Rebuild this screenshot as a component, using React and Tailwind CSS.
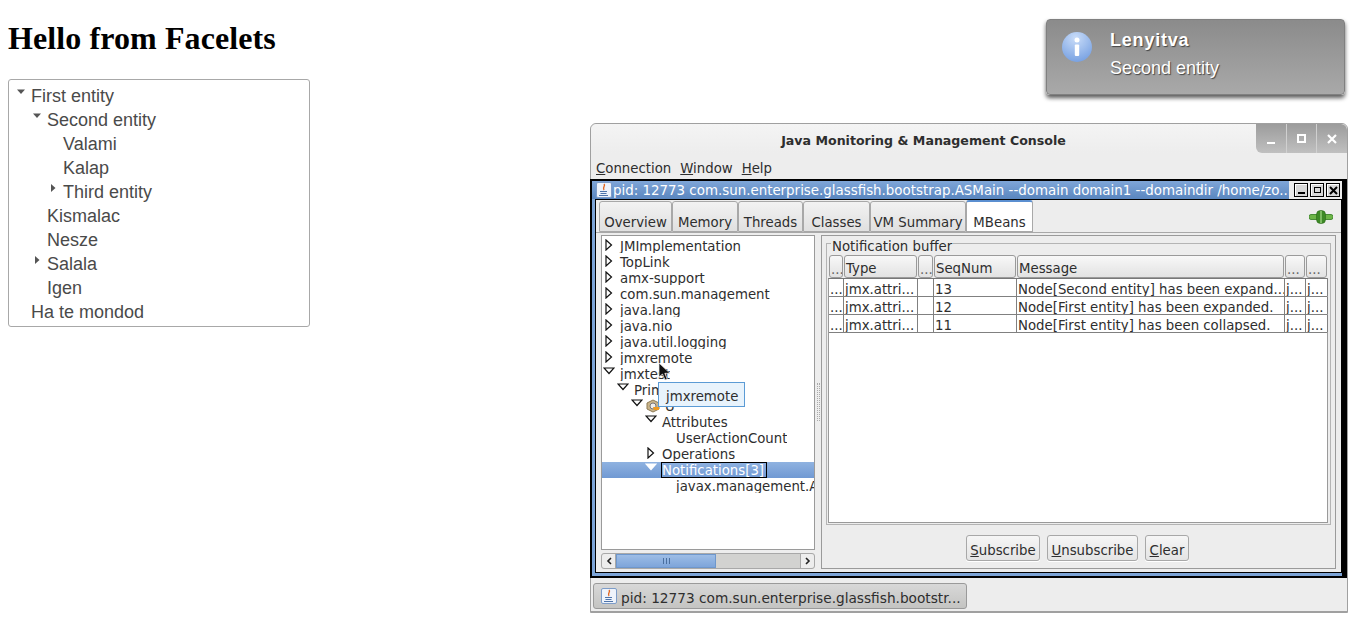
import React from 'react';

const JAVA_FONT = "font-['DejaVu_Sans',sans-serif]";

const webTree = [
  { label: 'First entity', level: 0, arrow: 'down' },
  { label: 'Second entity', level: 1, arrow: 'down' },
  { label: 'Valami', level: 2 },
  { label: 'Kalap', level: 2 },
  { label: 'Third entity', level: 2, arrow: 'right' },
  { label: 'Kismalac', level: 1 },
  { label: 'Nesze', level: 1 },
  { label: 'Salala', level: 1, arrow: 'right' },
  { label: 'Igen', level: 1 },
  { label: 'Ha te mondod', level: 0 },
];

const mbeans = [
  { label: 'JMImplementation', pad: 0, arrow: 'right' },
  { label: 'TopLink', pad: 0, arrow: 'right' },
  { label: 'amx-support', pad: 0, arrow: 'right' },
  { label: 'com.sun.management', pad: 0, arrow: 'right' },
  { label: 'java.lang', pad: 0, arrow: 'right' },
  { label: 'java.nio', pad: 0, arrow: 'right' },
  { label: 'java.util.logging', pad: 0, arrow: 'right' },
  { label: 'jmxremote', pad: 0, arrow: 'right' },
  { label: 'jmxtest', pad: 0, arrow: 'down' },
  { label: 'Primary', pad: 14, arrow: 'down' },
  { label: 'U', pad: 28, arrow: 'down', bean: true },
  { label: 'Attributes', pad: 42, arrow: 'down' },
  { label: 'UserActionCount', pad: 56 },
  { label: 'Operations', pad: 42, arrow: 'right' },
  { label: 'Notifications[3]', pad: 42, arrow: 'down', selected: true },
  { label: 'javax.management.AttributeChangeNotification', pad: 56 },
];

const columns = [
  { title: '...', width: 'w-[15px]' },
  { title: 'Type', width: 'w-[74px]' },
  { title: '...', width: 'w-[16px]' },
  { title: 'SeqNum', width: 'w-[83px]' },
  { title: 'Message', width: 'w-[268px]' },
  { title: '...', width: 'w-[21px]' },
  { title: '...', width: 'w-[22px]' },
];

const rows = [
  ['...', 'jmx.attri...', '', '13', 'Node[Second entity] has been expand...', 'j...', 'j...'],
  ['...', 'jmx.attri...', '', '12', 'Node[First entity] has been expanded.', 'j...', 'j...'],
  ['...', 'jmx.attri...', '', '11', 'Node[First entity] has been collapsed.', 'j...', 'j...'],
];

const tabs = [
  { label: 'Overview', width: 'w-[73px]' },
  { label: 'Memory', width: 'w-[66px]' },
  { label: 'Threads', width: 'w-[65px]' },
  { label: 'Classes', width: 'w-[67px]' },
  { label: 'VM Summary', width: 'w-[96px]' },
  { label: 'MBeans', width: 'w-[67px]', active: true },
];

function WebCaret({ dir }) {
  return (
    <svg width="8" height="8" viewBox="0 0 8 8" className="shrink-0">
      {dir === 'down' ? <path d="M0 1.5h8L4 6z" fill="#555" /> : <path d="M2 0l4.5 4L2 8z" fill="#555" />}
    </svg>
  );
}

function WebTree() {
  return (
    <div className="w-[302px] h-[248px] mt-[22px] border border-[#a8a8a8] rounded-[3px] pt-1 font-['Liberation_Sans',sans-serif] text-[18px] text-[#4a4a4a]">
      {webTree.map((node) => (
        <div key={node.label} className={`flex items-center h-6 ${node.level === 0 ? 'pl-[5px]' : node.level === 1 ? 'pl-[21px]' : 'pl-[37px]'}`}>
          <span className="w-[14px] h-6 shrink-0 flex justify-center pt-[4px] mr-[3px]">
            {node.arrow && <WebCaret dir={node.arrow} />}
          </span>
          <span>{node.label}</span>
        </div>
      ))}
    </div>
  );
}

function Toast() {
  return (
    <div className="absolute left-[1046px] top-[19px] w-[299px] h-[76px] rounded-[4px] border border-[#808080] bg-gradient-to-b from-[#8b8b8b] to-[#a9a9a9] shadow-[0_3px_4px_rgba(0,0,0,0.65)] flex font-['Liberation_Sans',sans-serif] text-white [text-shadow:1px_1px_1px_#444]">
      <svg width="32" height="32" viewBox="0 0 32 32" className="ml-[14px] mt-[11px] shrink-0">
        <defs>
          <radialGradient id="infoFill" cx="0.45" cy="0.2" r="0.9">
            <stop offset="0" stopColor="#c9dcf8" />
            <stop offset="1" stopColor="#6f9be0" />
          </radialGradient>
        </defs>
        <circle cx="16" cy="16" r="15" fill="url(#infoFill)" />
        <circle cx="16" cy="9" r="2.5" fill="#fff" />
        <rect x="13.8" y="13.5" width="4.4" height="11.5" rx="1" fill="#fff" />
      </svg>
      <div className="ml-[17px] pt-[7px]">
        <div className="font-bold text-[18px] tracking-[0.8px] leading-[26px]">Lenyitva</div>
        <div className="text-[18px] leading-[28px] mt-[1px]">Second entity</div>
      </div>
    </div>
  );
}

function WindowButtons() {
  return (
    <div className="w-[91px] h-[29px] flex rounded-bl-[6px] rounded-tr-[6px] bg-gradient-to-b from-[#9c9c9c] to-[#c0c0c0] text-white">
      <div className="flex-1 flex items-center justify-center border-r border-[#d0d0d0]">
        <span className="w-[8px] h-[2px] mt-[8px] bg-white" />
      </div>
      <div className="flex-1 flex items-center justify-center border-r border-[#d0d0d0]">
        <span className="w-[9px] h-[9px] border-2 border-white" />
      </div>
      <div className="flex-1 flex items-center justify-center">
        <svg width="10" height="10" viewBox="0 0 10 10"><path d="M1 1l8 8M9 1l-8 8" stroke="#fff" strokeWidth="2.2" /></svg>
      </div>
    </div>
  );
}

function JavaIcon({ size = 16 }) {
  return (
    <svg width={size} height={size} viewBox="0 0 16 16" className="shrink-0">
      <rect x="0.5" y="0.5" width="15" height="15" rx="1.5" fill="#eef3fb" stroke="#7d9cc8" />
      <path d="M8 2c2 2-2 3 0 6" stroke="#e2641c" strokeWidth="1.4" fill="none" />
      <path d="M4 9.5h7M4.5 11.5h6M3 13.5h9" stroke="#4e74aa" strokeWidth="1.1" />
    </svg>
  );
}

function FrameButton({ children }) {
  return (
    <span className="w-[14px] h-[14px] flex items-center justify-center border border-black bg-[#d8d8d8] shadow-[inset_1px_1px_0_#fff]">
      {children}
    </span>
  );
}

function TreeArrow({ dir, selected }) {
  const fill = selected ? '#fff' : 'none';
  const stroke = selected ? '#fff' : '#111';
  if (dir === 'down') {
    return (
      <svg width="12" height="8" viewBox="0 0 12 8" className="shrink-0 -ml-[2px]">
        <path d="M1 1h10L6 6.5z" fill={fill} stroke={stroke} strokeWidth="1.2" />
      </svg>
    );
  }
  return (
    <svg width="8" height="12" viewBox="0 0 8 12" className="shrink-0">
      <path d="M1 1l5.5 5L1 11z" fill={fill} stroke={stroke} strokeWidth="1.2" />
    </svg>
  );
}

function BeanIcon() {
  return (
    <svg width="16" height="16" viewBox="0 0 16 16" className="shrink-0 ml-[-2px] mr-[3px]">
      <path d="M8 2l6 3v6l-6 3-6-3V5z" fill="#c9b48a" stroke="#8d7a55" />
      <circle cx="8" cy="8" r="3" fill="#eee" stroke="#777" />
      <path d="M8 9h6v3H9z" fill="#ef9a1f" />
    </svg>
  );
}

function MBeanTree() {
  return (
    <div className="flex-1 min-h-0 bg-white border border-[#9a9a9a] overflow-hidden pt-[2px] text-[13.3px]">
      {mbeans.map((node) => (
        <div
          key={node.label}
          style={{ paddingLeft: 3 + node.pad }}
          className={`flex items-start h-4 whitespace-nowrap overflow-hidden ${node.selected ? 'bg-gradient-to-b from-[#8fb2e0] to-[#7099d3] text-white' : 'text-[#2e2e2e]'}`}
        >
          <span className="w-[14px] h-4 shrink-0 flex pt-[1px]">
            {node.arrow && <TreeArrow dir={node.arrow} selected={node.selected} />}
          </span>
          {node.bean && <BeanIcon />}
          {/* swing repaint clips the descenders in the real tree */}
          <span className={`inline-block leading-[18px] pl-[1px] overflow-hidden ${node.selected ? 'h-4 pr-[3px] outline outline-1 outline-black -outline-offset-1' : 'h-[15px]'}`}>{node.label}</span>
        </div>
      ))}
    </div>
  );
}

function ScrollBar() {
  return (
    <div className="h-[16px] mt-[3px] flex rounded-[3px] border border-[#a8a8a8] bg-[#d2d2d0]">
      <span className="w-[14px] flex items-center justify-center border-r border-[#a8a8a8] bg-[#ededed] rounded-l-[3px]">
        <svg width="6" height="8" viewBox="0 0 6 8"><path d="M5 1L2 4l3 3" stroke="#222" strokeWidth="1.6" fill="none" /></svg>
      </span>
      <span className="w-[100px] flex items-center justify-center border border-[#6e97cc] bg-gradient-to-b from-[#9dbde6] to-[#7ea5da]">
        <span className="w-[7px] h-[6px] border-x border-[#4a6f9f] relative">
          <span className="block w-px h-full mx-auto bg-[#4a6f9f]" />
        </span>
      </span>
      <span className="flex-1" />
      <span className="w-[14px] flex items-center justify-center border-l border-[#a8a8a8] bg-[#ededed] rounded-r-[3px]">
        <svg width="6" height="8" viewBox="0 0 6 8"><path d="M1 1l3 3-3 3" stroke="#222" strokeWidth="1.6" fill="none" /></svg>
      </span>
    </div>
  );
}

function NotificationTable() {
  return (
    <div className="flex-1 min-h-0 flex flex-col text-[13.3px] text-[#2e2e2e]">
      <div className="flex h-[24px] pl-px">
        {columns.map((col, i) => (
          <div key={i} className={`${col.width} shrink-0 pr-px pt-px`}>
            <div className="h-[23px] flex items-center px-px whitespace-nowrap overflow-hidden rounded-[3px] border border-[#9a9a9a] bg-gradient-to-b from-[#f8f8f8] to-[#e2e2e2]">
              <span className={col.title === '...' ? 'text-[#666] pt-[6px]' : 'pt-[4px]'}>{col.title}</span>
            </div>
          </div>
        ))}
      </div>
      <div className="flex-1 bg-white border border-[#9a9a9a] border-t-[#777]">
        {rows.map((row) => (
          <div key={row[3]} className="flex h-[18px] border-b border-[#808080]">
            {row.map((cell, i) => (
              <div key={i} className={`${columns[i].width} shrink-0 border-r border-[#808080] leading-[21px] px-px whitespace-nowrap overflow-hidden`}>
                {cell}
              </div>
            ))}
          </div>
        ))}
      </div>
    </div>
  );
}

function ActionButton({ first, rest, width }) {
  return (
    <button className={`${width} h-[26px] pt-[5px] leading-[16px] rounded-[3px] border border-[#a8a8a8] bg-gradient-to-b from-[#f6f6f6] to-[#e4e4e4] text-[13.3px] text-[#2e2e2e] shadow-[0_1px_0_#fff]`}>
      <span className="underline">{first}</span>{rest}
    </button>
  );
}

function JavaWindow() {
  return (
    <div className={`absolute left-[590px] top-[123px] w-[758px] h-[490px] flex flex-col rounded-t-[6px] border border-[#a0a0a0] bg-[#ededed] ${JAVA_FONT}`}>
      <div className="h-[29px] flex bg-gradient-to-b from-[#f4f4f4] to-[#ededed] rounded-t-[6px]">
        <div className="flex-1 text-center font-bold text-[12.6px] leading-[33px] text-[#2e2e2e]">Java Monitoring &amp; Management Console</div>
        <WindowButtons />
      </div>
      <div className="h-[26px] flex items-end pl-[5px] pb-[1px] gap-[9px] text-[13.3px] leading-[18px] text-[#2e2e2e]">
        <span><span className="underline">C</span>onnection</span>
        <span><span className="underline">W</span>indow</span>
        <span><span className="underline">H</span>elp</span>
      </div>

      <div className="h-[399px] -ml-px flex flex-col border-2 border-r-[5px] border-black bg-[#7ba3d6] pl-[3px] pb-[3px]">
        <div className="h-[18px] flex items-center bg-gradient-to-b from-[#7fa6d8] to-[#5a86bf] text-white text-[13.4px] whitespace-nowrap overflow-hidden ml-[-3px] pl-[4px]">
          <JavaIcon />
          <span className="w-[677px] overflow-hidden pl-[1px] pt-[2px]">pid: 12773 com.sun.enterprise.glassfish.bootstrap.ASMain --domain domain1 --domaindir /home/zo...</span>
          <div className="flex-1 h-full flex justify-end items-center gap-[2px] pr-[2px] bg-[#ededed] text-black">
            <FrameButton><span className="w-[7px] h-[2px] mt-[5px] bg-black" /></FrameButton>
            <FrameButton><span className="w-[7px] h-[6px] border border-black" /></FrameButton>
            <FrameButton>
              <svg width="9" height="9" viewBox="0 0 9 9"><path d="M1 1l7 7M8 1L1 8" stroke="#000" strokeWidth="2" /></svg>
            </FrameButton>
          </div>
        </div>

        <div className="flex-1 min-h-0 flex flex-col bg-[#ededed] border border-black">
          <div className="h-[32px] flex items-end pl-[3px]">
            {tabs.map((tab) => (
              <div
                key={tab.label}
                className={`${tab.width} h-[31px] flex items-end justify-center leading-[16px] rounded-t-[3px] border border-[#a8a8a8] text-[13.3px] text-[#2e2e2e] whitespace-nowrap ${tab.active ? 'bg-white border-t-[#5b8fd0] border-t-2 h-[32px]' : 'bg-gradient-to-b from-[#f2f2f2] to-[#e0e0e0]'}`}
              >
                {tab.label}
              </div>
            ))}
            <div className="flex-1 flex justify-end pr-[8px] pb-[8px]">
              <svg width="24" height="14" viewBox="0 0 24 14">
                <rect x="0" y="4.5" width="24" height="5" rx="2" fill="#6db548" stroke="#2f7a1e" strokeWidth="0.8" />
                <rect x="7.5" y="0.5" width="9" height="13" rx="4" fill="#3d8a26" stroke="#2a6a18" strokeWidth="0.6" />
                <path d="M12 1v12" stroke="#a9dc8c" strokeWidth="1.2" />
              </svg>
            </div>
          </div>

          <div className="flex-1 min-h-0 flex border-t border-[#a8a8a8] pl-[5px] pt-[2px] pb-[3px] pr-[5px]">
            <div className="w-[214px] shrink-0 flex flex-col">
              <MBeanTree />
              <ScrollBar />
            </div>
            <div className="w-[6px] shrink-0 flex items-center justify-center">
              <span className="w-[3px] h-[38px] border-x border-dotted border-[#aaa]" />
            </div>
            <div className="flex-1 min-w-0 flex flex-col border border-[#9a9a9a] px-[4px] pt-[7px]">
              <div className="relative h-[282px] flex flex-col border border-[#b4b4b4] pl-px pr-[2px] pt-[10px] pb-px">
                <span className="absolute left-[4px] top-[-5px] px-px bg-[#ededed] text-[13.3px] leading-[16px] text-[#2e2e2e]">Notification buffer</span>
                <NotificationTable />
              </div>
              <div className="flex justify-center gap-[7px] pt-[10px] pr-[2px]">
                <ActionButton first="S" rest="ubscribe" width="w-[74px]" />
                <ActionButton first="U" rest="nsubscribe" width="w-[91px]" />
                <ActionButton first="C" rest="lear" width="w-[44px]" />
              </div>
            </div>
          </div>
        </div>
      </div>

      <div className="flex-1 flex items-center pl-[2px] pt-[2px] border-b border-[#a0a0a0]">
        <div className="w-[374px] h-[26px] flex items-center gap-[4px] pl-[7px] rounded-[3px] border border-[#9a9a9a] bg-gradient-to-b from-[#d8d8d8] to-[#c4c4c2] text-[13.7px] text-[#2e2e2e] whitespace-nowrap">
          <JavaIcon />
          <span className="leading-[16px] pt-[5px]">pid: 12773 com.sun.enterprise.glassfish.bootstr...</span>
        </div>
      </div>

      {/* tooltip + mouse pointer sit over the tree */}
      <div className="absolute left-[67px] top-[258px] w-[87px] h-[25px] flex items-center pl-[7px] pt-[4px] border border-[#5b9bd5] bg-[#e8f3fc] text-[13.3px] text-[#2e2e2e]">jmxremote</div>
      <svg width="13" height="20" viewBox="0 0 13 20" className="absolute left-[67px] top-[238px]">
        <path d="M1 1v14l3.5-3 2.5 6 2.2-1-2.4-5.7H12z" fill="#111" stroke="#eee" strokeWidth="0.7" />
      </svg>
    </div>
  );
}

export default function App() {
  return (
    <div className="relative w-full h-[622px] overflow-hidden bg-white">
      <div className="pl-2 pt-[20px]">
        <h1 className="font-['Liberation_Serif',serif] font-bold text-[32px] tracking-[0.1px] leading-[37px] text-black">Hello from Facelets</h1>
        <WebTree />
      </div>
      <Toast />
      <JavaWindow />
    </div>
  );
}
